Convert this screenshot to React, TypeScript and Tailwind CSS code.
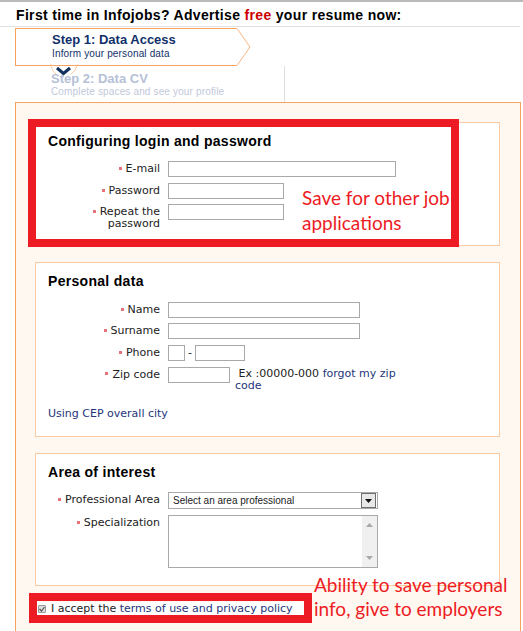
import type { ReactNode } from 'react'

const sans = "font-['Liberation_Sans',Arial,sans-serif]"
const verdana = "font-['DejaVu_Sans',Verdana,sans-serif]"

function Label({ children }: { children: ReactNode }) {
  return (
    <div className={`${verdana} w-[124px] shrink-0 pt-[2px] text-right text-[11px] leading-[12px] text-[#222]`}>
      <span className="mr-[4px] mb-[2px] inline-block h-[3px] w-[3px] bg-[#e8727c] align-middle" />
      {children}
    </div>
  )
}

function Field({ width }: { width: string }) {
  return <input readOnly className={`h-[16px] border border-[#a9a9a9] bg-white ${width}`} />
}

function Section({ title, height, children }: { title: string; height: string; children: ReactNode }) {
  return (
    <div className={`ml-[19px] w-[465px] border border-[#fdc9a2] bg-white pt-[10px] pl-[12px] ${height}`}>
      <h2 className={`${sans} text-[14px] leading-[16px] font-bold tracking-[0.3px] text-black`}>{title}</h2>
      {children}
    </div>
  )
}

export default function App() {
  return (
    <div className="relative h-[631px] w-[523px] overflow-hidden bg-white">
      <div className="h-[2px] bg-[#bababa]" />
      <div className="w-[520px] border-b border-[#e2e2e2] pt-[5px] pb-[3px] pl-[16px]">
        <h1 className={`${sans} text-[14px] leading-[16px] font-bold tracking-[0.33px] text-black`}>
          First time in Infojobs? Advertise <span className="text-[#cc0000]">free</span> your resume now:
        </h1>
      </div>

      {/* steps */}
      <div className="ml-[15px] pt-[1px]">
        <div className="flex">
          <div className="h-[38px] w-[221px] border-y border-l border-[#f7a25d] bg-white pt-[3px] pl-[36px]">
            <div className={`${sans} text-[13px] leading-[16px] font-bold text-[#12316a]`}>Step 1: Data Access</div>
            <div className={`${sans} text-[10px] leading-[12px] tracking-[0.15px] text-[#12316a]`}>Inform your personal data</div>
          </div>
          <svg width="15" height="38" className="block">
            <polyline points="0,0.5 1,0.5 14,19 1,37.5 0,37.5" fill="white" stroke="#f9b583" strokeWidth="1" />
          </svg>
        </div>
        <div className="relative h-[36px] w-[270px] border-r border-[#dedede] pt-[5px] pl-[36px]">
          <div className={`${sans} text-[13px] leading-[15px] font-bold text-[#b6c1d7]`}>Step 2: Data CV</div>
          <div className={`${sans} text-[10px] leading-[12px] tracking-[0.15px] text-[#bfc8da]`}>Complete spaces and see your profile</div>
          <svg width="30" height="16" className="absolute top-[-2px] left-[35px]">
            <path d="M1,0 A13,13 0 0 0 6,10" fill="none" stroke="#fbc9a2" strokeWidth="1" />
            <path d="M21,10 A13,13 0 0 0 27,0" fill="none" stroke="#fbc9a2" strokeWidth="1" />
            <path d="M7,4 L13.5,9.5 L20,4" fill="none" stroke="#14305e" strokeWidth="3" />
          </svg>
        </div>
      </div>

      {/* main form box */}
      <div className="ml-[15px] h-[560px] w-[506px] border border-[#f7a25d] bg-[#fff8f0] pt-[19px]">
        <Section title="Configuring login and password" height="h-[124px]">
          <div className="mt-[12px] -ml-[12px] flex flex-col">
            <div className="flex items-start gap-[8px]">
              <Label>E-mail</Label>
              <Field width="w-[228px]" />
            </div>
            <div className="mt-[6px] flex items-start gap-[8px]">
              <Label>Password</Label>
              <Field width="w-[116px]" />
            </div>
            <div className="mt-[5px] flex items-start gap-[8px]">
              <Label>
                Repeat the
                <br />
                password
              </Label>
              <Field width="w-[116px]" />
            </div>
          </div>
        </Section>

        <div className="h-[16px]" />
        <Section title="Personal data" height="h-[175px]">
          <div className="mt-[13px] -ml-[12px] flex flex-col">
            <div className="flex items-start gap-[8px]">
              <Label>Name</Label>
              <Field width="w-[192px]" />
            </div>
            <div className="mt-[5px] flex items-start gap-[8px]">
              <Label>Surname</Label>
              <Field width="w-[192px]" />
            </div>
            <div className="mt-[6px] flex items-start gap-[8px]">
              <Label>Phone</Label>
              <div className="flex items-center">
                <Field width="w-[17px]" />
                <span className={`${verdana} w-[10px] text-center text-[11px] text-[#222]`}>-</span>
                <Field width="w-[50px]" />
              </div>
            </div>
            <div className="mt-[5px] flex items-start gap-[8px]">
              <Label>Zip code</Label>
              <Field width="w-[62px]" />
              <div className={`${verdana} -ml-[3px] w-[170px] pt-[1px] text-[11px] leading-[12px]`}>
                <div>
                  <span className="text-[#222]">&nbsp;Ex :00000-000 </span>
                  <span className="text-[#24357a]">forgot my zip</span>
                </div>
                <div className="text-[#24357a]">code</div>
              </div>
            </div>
          </div>
          <div className={`${verdana} mt-[16px] text-[11px] leading-[12px] text-[#24357a]`}>Using CEP overall city</div>
        </Section>

        <div className="h-[16px]" />
        <Section title="Area of interest" height="h-[133px]">
          <div className="mt-[12px] -ml-[12px] flex flex-col">
            <div className="flex items-start gap-[8px]">
              <Label>Professional Area</Label>
              <div className="flex h-[17px] w-[210px] items-center border border-[#a9a9a9] bg-white">
                <span className={`${sans} flex-1 pl-[4px] text-[10px] text-[#222]`}>Select an area professional</span>
                <span className="mr-[1px] flex h-[15px] w-[15px] items-center justify-center border border-[#6e6e6e] bg-[#e8e8e8]">
                  <svg width="7" height="4">
                    <polygon points="0,0 7,0 3.5,4" fill="#111" />
                  </svg>
                </span>
              </div>
            </div>
            <div className="mt-[6px] flex items-start gap-[8px]">
              <Label>Specialization</Label>
              <div className="flex h-[53px] w-[210px] justify-end border border-[#a9a9a9] bg-white">
                <div className="flex w-[15px] flex-col items-center justify-between bg-[#f0f0f0] py-[7px]">
                  <svg width="7" height="4">
                    <polygon points="0,4 7,4 3.5,0" fill="#a8a8a8" />
                  </svg>
                  <svg width="7" height="4">
                    <polygon points="0,0 7,0 3.5,4" fill="#a8a8a8" />
                  </svg>
                </div>
              </div>
            </div>
          </div>
        </Section>

        <div className={`${verdana} mt-[16px] ml-[21px] flex h-[14px] w-[268px] items-center bg-white pl-[1px] text-[11px] leading-[12px]`}>
          <span className="mr-[5px] flex h-[8px] w-[8px] items-center justify-center rounded-[1px] border border-[#9a9a9a] bg-[#dcdcdc]">
            <svg width="6" height="6">
              <polyline points="0.5,3 2.5,5 5.5,1" fill="none" stroke="#555" strokeWidth="1.2" />
            </svg>
          </span>
          <span className="text-[#222]">I accept the&nbsp;</span>
          <span className="text-[#24357a]">terms of use and privacy policy</span>
        </div>

        <div className="mt-[15px] ml-[201px] h-[24px] w-[103px] rounded-[4px] border border-[#8a8a8a] bg-[#f4f4f4]" />
      </div>

      {/* annotations */}
      <div className="pointer-events-none absolute top-[185px] left-[302px] font-['Lato',sans-serif] text-[19px] leading-[25px] text-[#ed1c24]">
        Save for other job
        <br />
        applications
      </div>
      <div className="pointer-events-none absolute top-[119px] left-[28px] h-[128px] w-[431px] border-[8px] border-[#ed1c24]" />
      <div className="pointer-events-none absolute top-[593px] left-[29px] h-[30px] w-[283px] border-[8px] border-[#ed1c24]" />
      <div className="pointer-events-none absolute top-[573px] left-[314px] font-['Lato',sans-serif] text-[19px] leading-[24px] text-[#ed1c24]">
        Ability to save personal
        <br />
        info, give to employers
      </div>
    </div>
  )
}
